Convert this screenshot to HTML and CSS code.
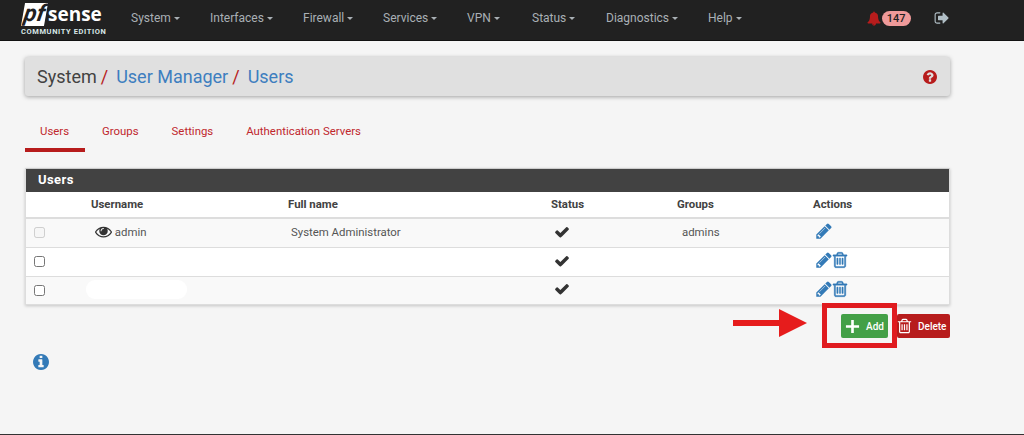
FILE: index.html
```html
<!DOCTYPE html>
<html>

<head>
	<meta charset="utf-8">
	<title>pfSense - System: User Manager: Users</title>
	<link rel="stylesheet" href="styles.css">
</head>

<body>
	<svg class="defs" width="0" height="0">
		<symbol id="i-check" viewBox="0 0 1792 1792"><path d="M1671 566q0 40-28 68l-724 724-136 136q-28 28-68 28t-68-28l-136-136-362-362q-28-28-28-68t28-68l136-136q28-28 68-28t68 28l294 295 656-657q28-28 68-28t68 28l136 136q28 28 28 68z"/></symbol>
		<symbol id="i-pencil" viewBox="0 0 1792 1792"><path d="M491 1536l91-91-235-235-91 91v107h128v128h107zm523-928q0-22-22-22-10 0-17 7l-542 542q-7 7-7 17 0 22 22 22 10 0 17-7l542-542q7-7 7-17zm-54-192l416 416-832 832h-416v-416zm683 96q0 53-37 90l-166 166-416-416 166-165q36-38 90-38 53 0 91 38l235 234q37 39 37 91z"/></symbol>
		<symbol id="i-trash" viewBox="0 0 1792 1792"><path d="M704 736v576q0 14-9 23t-23 9h-64q-14 0-23-9t-9-23v-576q0-14 9-23t23-9h64q14 0 23 9t9 23zm256 0v576q0 14-9 23t-23 9h-64q-14 0-23-9t-9-23v-576q0-14 9-23t23-9h64q14 0 23 9t9 23zm256 0v576q0 14-9 23t-23 9h-64q-14 0-23-9t-9-23v-576q0-14 9-23t23-9h64q14 0 23 9t9 23zm128 724v-948h-896v948q0 22 7 40.5t14.5 27 10.5 8.5h832q3 0 10.5-8.5t14.5-27 7-40.5zm-672-1076h448l-48-117q-7-9-17-11h-317q-10 2-17 11zm928 32v64q0 14-9 23t-23 9h-96v948q0 83-47 143.5t-113 60.5h-832q-66 0-113-58.5t-47-141.5v-952h-96q-14 0-23-9t-9-23v-64q0-14 9-23t23-9h309l70-167q15-37 54-63t79-26h320q40 0 79 26t54 63l70 167h309q14 0 23 9t9 23z"/></symbol>
	</svg>

	<nav class="topbar">
		<a class="logo">
			<span class="logo__mark"><span class="logo__pf">pf</span><span class="logo__sense">sense</span></span>
			<span class="logo__edition">COMMUNITY EDITION</span>
		</a>
		<ul class="menu">
			<li class="menu__item menu__item--system">System <i class="caret"></i></li>
			<li class="menu__item menu__item--interfaces">Interfaces <i class="caret"></i></li>
			<li class="menu__item menu__item--firewall">Firewall <i class="caret"></i></li>
			<li class="menu__item menu__item--services">Services <i class="caret"></i></li>
			<li class="menu__item menu__item--vpn">VPN <i class="caret"></i></li>
			<li class="menu__item menu__item--status">Status <i class="caret"></i></li>
			<li class="menu__item menu__item--diagnostics">Diagnostics <i class="caret"></i></li>
			<li class="menu__item">Help <i class="caret"></i></li>
		</ul>
		<div class="alerts">
			<svg class="alerts__bell" viewBox="0 0 1792 1792"><path d="M912 1696q0-16-16-16-59 0-101.5-42.5t-42.5-101.5q0-16-16-16t-16 16q0 73 51.5 124.5t124.5 51.5q16 0 16-16zm816-288q0 52-38 90t-90 38h-448q0 106-75 181t-181 75-181-75-75-181h-448q-52 0-90-38t-38-90q50-42 91-88t85-119.5 74.5-158.5 50-206 19.5-260q0-152 117-282.5t307-158.5q-8-19-8-39 0-40 28-68t68-28 68 28 28 68q0 20-8 39 190 28 307 158.5t117 282.5q0 139 19.5 260t50 206 74.5 158.5 85 119.5 91 88z"/></svg>
			<span class="alerts__count">147</span>
		</div>
		<svg class="logout" viewBox="0 0 1792 1792"><path d="M704 1440q0 4 1 20t.5 26.5-3 23.5-10 19.5-20.5 6.5h-320q-119 0-203.5-84.5t-84.5-203.5v-704q0-119 84.5-203.5t203.5-84.5h320q13 0 22.5 9.5t9.5 22.5q0 4 1 20t.5 26.5-3 23.5-10 19.5-20.5 6.5h-320q-66 0-113 47t-47 113v704q0 66 47 113t113 47h312l11.5 1 11.5 3 8 5.5 7 9 2 13.5zm928-544q0 26-19 45l-544 544q-19 19-45 19t-45-19-19-45v-288h-448q-26 0-45-19t-19-45v-384q0-26 19-45t45-19h448v-288q0-26 19-45t45-19 45 19l544 544q19 19 19 45z"/></svg>
	</nav>

	<main class="page">
		<header class="crumbs">
			<h1 class="crumbs__title">System<span class="crumbs__sep">/</span><a class="crumbs__link">User Manager</a><span class="crumbs__sep">/</span><a class="crumbs__link">Users</a></h1>
			<svg class="crumbs__help" viewBox="128 128 1536 1536"><path d="M1024 1376v-192q0-14-9-23t-23-9h-192q-14 0-23 9t-9 23v192q0 14 9 23t23 9h192q14 0 23-9t9-23zm256-672q0-88-55.5-163t-138.5-116-170-41q-243 0-371 213-15 24 8 42l132 100q7 6 19 6 16 0 25-12 53-68 86-92 34-24 86-24 48 0 85.5 26t37.5 59q0 38-20 61t-68 45q-63 28-115.5 86.5t-52.5 125.5v36q0 14 9 23t23 9h192q14 0 23-9t9-23q0-19 21.5-49.5t54.5-49.5q32-18 49-28.5t46-35 44.5-48 28-60.5 12.5-81zm384 192q0 209-103 385.5t-279.5 279.5-385.5 103-385.5-103-279.5-279.5-103-385.5 103-385.5 279.5-279.5 385.5-103 385.5 103 279.5 279.5 103 385.5z"/></svg>
		</header>

		<ul class="tabs">
			<li class="tabs__item is-active">Users</li>
			<li class="tabs__item">Groups</li>
			<li class="tabs__item">Settings</li>
			<li class="tabs__item">Authentication Servers</li>
		</ul>

		<section class="panel">
			<h2 class="panel__heading">Users</h2>
			<table class="users">
				<colgroup>
					<col class="users__c-check">
					<col class="users__c-name">
					<col class="users__c-full">
					<col class="users__c-status">
					<col class="users__c-groups">
					<col>
				</colgroup>
				<thead>
					<tr>
						<th></th>
						<th>Username</th>
						<th>Full name</th>
						<th>Status</th>
						<th>Groups</th>
						<th>Actions</th>
					</tr>
				</thead>
				<tbody>
					<tr class="is-striped">
						<td class="users__check"><input type="checkbox" disabled></td>
						<td class="users__name">
							<svg class="eye" viewBox="0 0 1792 1792"><path d="M1664 960q-152-236-381-353 61 104 61 225 0 185-131.5 316.5t-316.5 131.5-316.5-131.5-131.5-316.5q0-121 61-225-229 117-381 353 133 205 333.5 326.5t434.5 121.5 434.5-121.5 333.5-326.5zm-720-384q0-20-14-34t-34-14q-125 0-214.5 89.5t-89.5 214.5q0 20 14 34t34 14 34-14 14-34q0-86 61-147t147-61q20 0 34-14t14-34zm848 384q0 34-20 69-140 230-376.5 368.5t-499.5 138.5-499.5-139-376.5-368q-20-35-20-69t20-69q140-229 376.5-368t499.5-139 499.5 139 376.5 368q20 35 20 69z"/></svg>
							admin
						</td>
						<td class="users__full">System Administrator</td>
						<td><svg class="check"><use href="#i-check"/></svg></td>
						<td class="users__group">admins</td>
						<td class="users__actions"><svg class="act"><use href="#i-pencil"/></svg></td>
					</tr>
					<tr>
						<td class="users__check"><input type="checkbox"></td>
						<td></td>
						<td></td>
						<td><svg class="check"><use href="#i-check"/></svg></td>
						<td></td>
						<td class="users__actions"><svg class="act"><use href="#i-pencil"/></svg><svg class="act act--trash"><use href="#i-trash"/></svg></td>
					</tr>
					<tr class="is-striped">
						<td class="users__check"><input type="checkbox"></td>
						<td><span class="redacted"></span></td>
						<td></td>
						<td><svg class="check"><use href="#i-check"/></svg></td>
						<td></td>
						<td class="users__actions"><svg class="act"><use href="#i-pencil"/></svg><svg class="act act--trash"><use href="#i-trash"/></svg></td>
					</tr>
				</tbody>
			</table>
		</section>

		<div class="buttons">
			<a class="btn btn--add">
				<svg class="btn__icon" viewBox="0 0 16 16"><path d="M6.6 1h2.8v5.6H15v2.8H9.4V15H6.6V9.4H1V6.6h5.6z"/></svg>
				Add
			</a>
			<a class="btn btn--delete"><svg class="btn__icon btn__icon--trash"><use href="#i-trash"/></svg> Delete</a>
			<span class="callout"></span>
			<svg class="arrow" viewBox="0 0 74 28"><path d="M0 11H46V0L74 14 46 28V17H0z"/></svg>
		</div>

		<svg class="info" viewBox="128 128 1536 1536"><path d="M1152 1376v-160q0-14-9-23t-23-9h-96v-512q0-14-9-23t-23-9h-320q-14 0-23 9t-9 23v160q0 14 9 23t23 9h96v320h-96q-14 0-23 9t-9 23v160q0 14 9 23t23 9h448q14 0 23-9t9-23zm-128-896v-160q0-14-9-23t-23-9h-192q-14 0-23 9t-9 23v160q0 14 9 23t23 9h192q14 0 23-9t9-23zm640 416q0 209-103 385.5t-279.5 279.5-385.5 103-385.5-103-279.5-279.5-103-385.5 103-385.5 279.5-279.5 385.5-103 385.5 103 279.5 279.5 103 385.5z"/></svg>
	</main>
</body>

</html>
```

FILE: styles.css
```css
* {
	box-sizing: border-box;
}

html,
body {
	margin: 0;
	padding: 0;
	height: 100%;
	overflow: hidden;
}

body {
	background-color: #f5f5f5;
	border-bottom: 1px solid #333;
	color: #333;
	font-family: Roboto, "Liberation Sans", sans-serif;
	font-size: 12px;
}

.defs {
	position: absolute;
}

/* top navigation */
.topbar {
	display: flex;
	align-items: center;
	height: 41px;
	padding: 0 0 4px 21px;
	background-color: #212121;
	border-bottom: 1px solid #111;
}

.logo {
	display: flex;
	flex-direction: column;
	width: 86px;
	margin-top: 3px;
}

.logo__mark {
	display: flex;
	align-items: center;
	height: 23px;
}

.logo__pf {
	display: block;
	width: 23px;
	height: 23px;
	margin-left: 2px;
	background-color: #fff;
	color: #212121;
	font-size: 23px;
	font-style: italic;
	font-weight: 700;
	line-height: 21px;
	text-align: center;
	transform: skewX(-10deg);
}

.logo__sense {
	margin-left: 2px;
	color: #fff;
	font-family: "Open Sans", sans-serif;
	font-size: 19px;
	font-weight: 700;
	line-height: 23px;
}

.logo__edition {
	margin-top: 2px;
	color: #d7e6e6;
	font-size: 7.500px;
	font-weight: 700;
	line-height: 8px;
	letter-spacing: 0.600px;
	white-space: nowrap;
}

.menu {
	display: flex;
	margin: 0 0 0 24px;
	padding: 0;
	list-style: none;
}

.menu__item {
	color: #a9b0b5;
	font-size: 12px;
	white-space: nowrap;
}

.menu__item--system {
	width: 79px;
}

.menu__item--interfaces {
	width: 93px;
}

.menu__item--firewall {
	width: 80px;
}

.menu__item--services {
	width: 84px;
}

.menu__item--vpn {
	width: 65px;
}

.menu__item--status {
	width: 74px;
}

.menu__item--diagnostics {
	width: 102px;
}

.caret {
	display: inline-block;
	vertical-align: middle;
	border-top: 3px solid #a9b0b5;
	border-left: 3px solid transparent;
	border-right: 3px solid transparent;
}

.alerts {
	display: flex;
	align-items: center;
	margin-left: 125px;
}

.alerts__bell {
	width: 14px;
	height: 15px;
	fill: #b71c1c;
}

.alerts__count {
	width: 29px;
	height: 15px;
	margin-left: 1px;
	border-radius: 7.500px;
	background-color: #ef9a9a;
	color: #212121;
	font-size: 11px;
	font-weight: 500;
	line-height: 15px;
	text-align: center;
}

.logout {
	width: 16px;
	height: 16px;
	margin-left: 23px;
	fill: #b0bec5;
}

/* page */
.page {
	width: 925px;
	margin-left: 25px;
	padding-top: 16px;
}

.crumbs {
	display: flex;
	align-items: center;
	justify-content: space-between;
	height: 39px;
	padding: 0 13px 0 12px;
	border-radius: 3px;
	background-color: #e0e0e0;
	box-shadow: 0 1px 4px rgba(0, 0, 0, .35);
}

.crumbs__title {
	margin: 0;
	color: #424242;
	font-size: 18px;
	font-weight: 400;
}

.crumbs__sep {
	margin: 0 8px 0 4px;
	color: #b71c1c;
}

.crumbs__link {
	color: #3d7ebf;
}

.crumbs__help {
	width: 14px;
	height: 14px;
	fill: #b71c1c;
}

.tabs {
	display: flex;
	height: 34px;
	margin: 22px 0 0;
	padding: 0;
	list-style: none;
}

.tabs__item {
	padding: 6px 16px 0 17px;
	color: #c0272d;
	font-size: 11.400px;
	line-height: 14px;
	white-space: nowrap;
}

.tabs__item.is-active {
	border-bottom: 4px solid #b71c1c;
	padding: 6px 16px 0 15px;
}

/* users panel */
.panel {
	margin-top: 16px;
	border: 1px solid #ddd;
	border-top: 1px solid #ccc;
	background-color: #fff;
	box-shadow: 0 1px 3px rgba(0, 0, 0, .2);
}

.panel__heading {
	height: 23px;
	margin: 0;
	padding-left: 12px;
	background-color: #424242;
	color: #fff;
	font-size: 13px;
	font-weight: 700;
	letter-spacing: 0.400px;
	line-height: 22px;
}

.users {
	width: 100%;
	border-collapse: collapse;
	table-layout: fixed;
}

.users__c-check {
	width: 65px;
}

.users__c-name {
	width: 197px;
}

.users__c-full {
	width: 263px;
}

.users__c-status {
	width: 126px;
}

.users__c-groups {
	width: 136px;
}

.users th {
	height: 26px;
	padding: 0 0 2px;
	color: #424242;
	font-size: 11.400px;
	font-weight: 700;
	text-align: left;
	border-bottom: 2px solid #ddd;
}

.users td {
	height: 29px;
	padding: 0 0 2px;
	color: #555;
	font-size: 11.400px;
	border-top: 1px solid #ddd;
}

.users tbody tr:last-child td {
	height: 28px;
}

.users tr.is-striped td {
	background-color: #f9f9f9;
}

.users td.users__check {
	padding: 0 0 0 8px;
}

.users__check input {
	display: block;
	width: 11px;
	height: 11px;
	margin: 0;
}

.users td.users__name {
	padding-left: 4px;
}

.users td.users__full {
	padding-left: 3px;
}

.users td.users__group {
	padding-left: 5px;
}

.users td.users__actions {
	padding: 0 0 3px 2px;
	font-size: 0;
}

.eye {
	width: 17px;
	height: 17px;
	fill: #333;
	vertical-align: -4px;
}

.check {
	display: block;
	width: 16px;
	height: 16px;
	margin: 0 0 0 3px;
	fill: #333;
}

.act {
	width: 18px;
	height: 18px;
	fill: #337ab7;
}

.act--trash {
	margin-left: -2px;
	stroke: #337ab7;
	stroke-width: 40px;
}

.redacted {
	display: block;
	width: 101px;
	height: 19px;
	margin-left: -5px;
	border-radius: 9px;
	background-color: #fff;
}

/* buttons and screenshot annotation */
.buttons {
	position: relative;
	display: flex;
	justify-content: flex-end;
	gap: 9px;
	margin-top: 9px;
}

.btn {
	display: flex;
	align-items: center;
	height: 24px;
	border-radius: 2px;
	color: #fff;
	font-size: 10px;
	font-weight: 500;
}

.btn--add {
	width: 47px;
	padding-left: 4px;
	background-color: #43a047;
}

.btn--delete {
	width: 53px;
	background-color: #b71c1c;
	gap: 5px;
}

.btn__icon {
	width: 15px;
	height: 15px;
	margin-right: 6px;
	fill: #fff;
}

.btn__icon--trash {
	width: 17px;
	height: 18px;
	margin-right: 0;
	margin-left: -1px;
}

.callout {
	position: absolute;
	top: -11px;
	left: 797px;
	width: 75px;
	height: 45px;
	border: 5px solid #e01b1f;
}

.arrow {
	position: absolute;
	top: -5px;
	left: 708px;
	width: 74px;
	height: 28px;
	fill: #e61c1c;
}

.info {
	display: block;
	width: 16px;
	height: 16px;
	margin: 16px 0 0 8px;
	fill: #337ab7;
}
```
